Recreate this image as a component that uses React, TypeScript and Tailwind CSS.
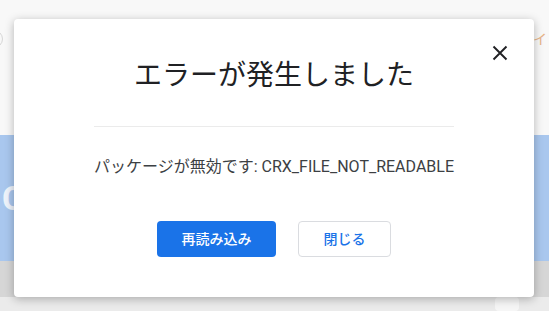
import React from 'react';

const App: React.FC = () => {
  return (
    <div className="relative w-[549px] h-[311px] overflow-hidden bg-[#f8f8f8] font-[Roboto,'Noto_Sans_CJK_JP',sans-serif]">
      {/* Page behind the dialog */}
      <div className="flex flex-col h-full">
        <div className="h-[135px] flex justify-between items-start pt-[30px]">
          <div className="w-[18px] h-[18px] -ml-[15px] rounded-full border border-[#d6d6d6]" />
          <span className="text-[14px] leading-[18px] text-[#e7b48a] pr-[2px]">イ</span>
        </div>
        <div className="h-[126px] bg-[#a9c7ee] flex items-center pl-[2px]">
          <span className="text-[34px] font-bold leading-none text-[#eef3fb]">C</span>
        </div>
        <div className="h-[36px] bg-[#d6d6d6]" />
        <div className="flex-1 bg-[#ebebeb] flex justify-end items-start pr-[30px]">
          <div className="w-[24px] h-[14px] bg-[#f6f6f6] rounded-sm" />
        </div>
      </div>

      {/* Dialog */}
      <div className="absolute left-[14px] top-[19px] w-[520px] h-[278px] bg-white rounded shadow-[0_2px_10px_rgba(0,0,0,0.28)] flex flex-col items-center pt-[37px]">
        <button className="absolute right-[22px] top-[22px] w-[24px] h-[24px] text-[#202124]">
          <svg viewBox="0 0 24 24" width="24" height="24" fill="none" stroke="currentColor" strokeWidth="1.9">
            <path d="M5.5 5.5L18.5 18.5M18.5 5.5L5.5 18.5" />
          </svg>
        </button>

        <h1 className="text-[28px] leading-[40px] font-normal text-[#202124]">エラーが発生しました</h1>
        <div className="w-[360px] h-px bg-[#ebebeb] mt-[30px]" />
        <p className="mt-[28px] text-[16px] leading-[24px] text-[#3c4043] whitespace-nowrap">
          パッケージが無効です: CRX_FILE_NOT_READABLE
        </p>

        <div className="mt-[42px] flex gap-[22px]">
          <button className="w-[119px] h-[36px] rounded bg-[#1a73e8] text-white text-[14px] font-medium">
            再読み込み
          </button>
          <button className="w-[93px] h-[36px] rounded border border-[#dadce0] bg-white text-[#1a73e8] text-[14px] font-medium">
            閉じる
          </button>
        </div>
      </div>
    </div>
  );
};

export default App;
